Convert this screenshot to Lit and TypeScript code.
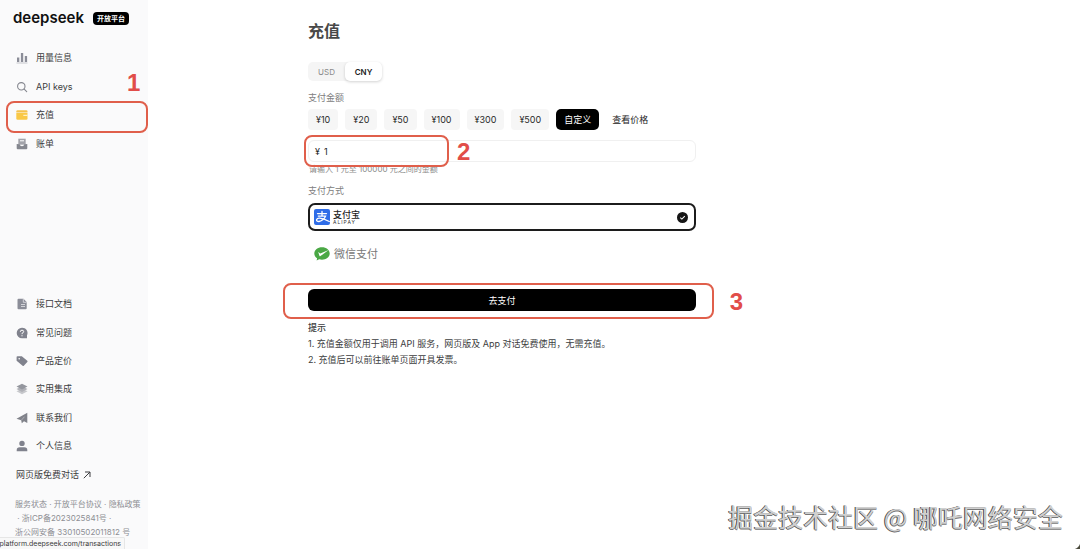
import { LitElement, html, css, svg, TemplateResult } from "lit";
import { customElement, property, state } from "lit/decorators.js";

const icons: Record<string, TemplateResult> = {
  usage: svg`<path fill="#8b8d98" d="M1 5.500h2.300V10H1zM4.900 1h2.300v9H4.900zM8.800 4h2.300v6H8.800z"/><path stroke="#c4c5cb" d="M.5 11h11"/>`,
  keys: svg`<g fill="none" stroke="#85878f" stroke-width="1.100" stroke-linecap="round"><circle cx="5.300" cy="5.300" r="3.700"/><path d="M8.200 8.200l2.500 2.500"/></g>`,
  wallet: svg`<path fill="#f5c24c" d="M1.500 1.200h8.800q1.200 0 1.200 1.300v1H.3v-1q0-1.300 1.200-1.300z"/><path fill="#f9c846" d="M.3 4.100h11.200v5.400q0 1.300-1.200 1.300H1.500Q.3 10.800.3 9.500z"/><path fill="#fff3cf" d="M7.300 5.800h4.200v1.100H7.300z"/>`,
  bill: svg`<path fill="#a2a3aa" d="M2.300.7h7.400v6H2.300z"/><path stroke="#fff" d="M4 2.800h4"/><path fill="#85878f" d="M.7 6l3 .2Q4 8.300 6 8.300t2.300-2.100l3-.2v4.200q0 1-1 1H1.700q-1 0-1-1z"/>`,
  docs: svg`<path fill="#8b8d98" d="M2.500.8h5L10.700 4v6.200q0 1-1 1H2.500q-1 0-1-1V1.800q0-1 1-1z"/><path stroke="#e4e4e8" stroke-width=".8" fill="none" d="M7.300 1v3.300h3.200M5 6.500h4M5 8.500h4"/>`,
  faq: svg`<path fill="#80828d" d="M6 .7a5.300 5.300 0 1 0 0 10.600h5v-3A5.300 5.300 0 0 0 6 .7z"/><path fill="none" stroke="#fff" d="M4.300 4.800Q4.300 3.200 6 3.200t1.700 1.500Q7.700 5.600 6 6.400v.8M6 8.200v1.100"/>`,
  price: svg`<path fill="#80828d" d="M.6 2Q.6 1.200 1.500 1.200h4.300l5.500 4.600q.6.600 0 1.200L7.800 10.700q-.6.500-1.200 0L.6 5.800z"/><circle cx="3.200" cy="3.700" r=".8" fill="#fff"/>`,
  layers: svg`<path fill="#c7c8cc" d="M.5 8.300L6 5.800l5.500 2.500L6 11.300z"/><path fill="#b0b1b7" d="M.5 6L6 3.300 11.500 6 6 9z"/><path fill="#94969e" d="M.5 3.500L6 .7l5.500 2.800L6 6.500z"/>`,
  contact: svg`<path fill="#80828a" d="M.5 6.700L11.300.8v10.300L8 9.300l-2.200 2-.6-3.100z"/><path stroke="#d8d8dc" stroke-width=".5" d="M5.400 8.200L8.500 4.700"/>`,
  user: svg`<circle cx="6" cy="3.400" r="2.700" fill="#80828d"/><path fill="#80828d" d="M.7 11.200V9.900q0-2.600 3-2.600h4.600q3 0 3 2.600v1.300z"/>`,
};

interface NavEntry {
  icon: string;
  label: string;
}

const primary: NavEntry[] = [
  { icon: "usage", label: "用量信息" },
  { icon: "keys", label: "API keys" },
  { icon: "wallet", label: "充值" },
  { icon: "bill", label: "账单" },
];

const secondary: NavEntry[] = [
  { icon: "docs", label: "接口文档" },
  { icon: "faq", label: "常见问题" },
  { icon: "price", label: "产品定价" },
  { icon: "layers", label: "实用集成" },
  { icon: "contact", label: "联系我们" },
  { icon: "user", label: "个人信息" },
];

const annotation = css`
  .mark {
    position: absolute;
    box-sizing: border-box;
    border: 2px solid #e05f4b;
    border-radius: 8px;
    pointer-events: none;
  }
  .step {
    position: absolute;
    font: bold 24px/24px "Liberation Sans", sans-serif;
    color: #e14d49;
    pointer-events: none;
  }
`;

@customElement("side-bar")
class SideBar extends LitElement {
  static styles = [
    annotation,
    css`
      :host {
        display: flex;
        flex-direction: column;
        justify-content: space-between;
        box-sizing: border-box;
        width: 148px;
        flex: none;
        padding: 8px 0 10px;
        background: #fafafb;
        color: #3c3d40;
      }
      .brand {
        display: flex;
        align-items: center;
        gap: 9px;
        height: 20px;
        padding-left: 13px;
        margin-bottom: 16px;
      }
      .word {
        font-size: 15px;
        line-height: 20px;
        font-weight: 600;
        color: #101010;
      }
      .badge {
        padding: 0 4px;
        border-radius: 4px;
        background: #000;
        color: #fff;
        font-size: 7px;
        line-height: 13px;
        font-weight: 700;
      }
      .list {
        display: grid;
        grid-auto-rows: 1fr;
        margin: 0;
        padding: 0;
        list-style: none;
      }
      .top {
        height: 114px;
      }
      .bottom {
        height: 199px;
      }
      .item {
        position: relative;
        display: flex;
        align-items: center;
      }
      .link {
        display: flex;
        align-items: center;
        gap: 8px;
        padding-left: 16px;
        font-size: 9px;
        line-height: 16px;
        color: inherit;
        text-decoration: none;
      }
      .glyph {
        width: 12px;
        height: 12px;
      }
      .chat {
        gap: 4px;
      }
      .arrow {
        width: 8px;
        height: 8px;
      }
      .around {
        inset: 0 0 -3px 6px;
      }
      .one {
        left: 127px;
        top: -30px;
      }
      .legal {
        margin: 8px 0 0 15px;
        font-size: 8px;
        line-height: 14px;
        color: #8d8e93;
        white-space: nowrap;
      }
      .legal a {
        color: inherit;
        text-decoration: none;
      }
      .row {
        display: block;
      }
    `,
  ];

  @property() current = "充值";

  private entry(e: NavEntry) {
    const active = e.label === this.current;
    return html`<li class="item">
      <a class="link" href="#" aria-current=${active ? "page" : "false"}>
        <svg class="glyph" viewBox="0 0 12 12" aria-hidden="true">${icons[e.icon]}</svg>
        <span>${e.label}</span>
      </a>
      ${active ? html`<span class="mark around"></span><span class="step one">1</span>` : ""}
    </li>`;
  }

  render() {
    return html`
      <div>
        <div class="brand"><span class="word">deepseek</span><span class="badge">开放平台</span></div>
        <ul class="list top">${primary.map((e) => this.entry(e))}</ul>
      </div>
      <div>
        <ul class="list bottom">
          ${secondary.map((e) => this.entry(e))}
          <li class="item">
            <a class="link chat" href="#"><span>网页版免费对话</span>
              <svg class="arrow" viewBox="0 0 8 8" fill="none" stroke="#3c3d40" aria-hidden="true"><path d="M.8 7.200L7 1M2 1h5v5"/></svg>
            </a>
          </li>
        </ul>
        <div class="legal">
          <span class="row"><a href="#">服务状态</a> · <a href="#">开放平台协议</a> · <a href="#">隐私政策</a></span>
          <span class="row">&nbsp;· <a href="#">浙ICP备2023025841号</a> ·</span>
          <span class="row"><a href="#">浙公网安备 33010502011812 号</a></span>
        </div>
      </div>
    `;
  }
}

@customElement("top-up")
class TopUp extends LitElement {
  static styles = [
    annotation,
    css`
      :host {
        display: block;
        flex: 1;
        box-sizing: border-box;
        min-width: 0;
        padding: 20px 160px 0;
        color: #3c3d40;
      }
      .column {
        display: flex;
        flex-direction: column;
        max-width: 388px;
      }
      button,
      input {
        font: inherit;
        color: inherit;
        border: 0;
        background: none;
        padding: 0;
        margin: 0;
      }
      .title {
        margin: 0 0 20px;
        font-size: 16px;
        line-height: 22px;
        font-weight: 600;
        color: #484848;
      }
      .segment {
        display: flex;
        align-self: flex-start;
        height: 19px;
        border-radius: 5px;
        background: #f5f5f5;
      }
      .currency {
        width: 37px;
        border-radius: 5px;
        font-size: 8px;
        color: #8b8b8b;
      }
      .currency[aria-pressed="true"] {
        background: #fff;
        color: #222;
        font-weight: 600;
        box-shadow: 0 1px 3px rgba(0, 0, 0, 0.18);
      }
      .label {
        margin-top: 9px;
        font-size: 9px;
        line-height: 16px;
        color: #808080;
      }
      .amounts {
        display: flex;
        gap: 7px;
        margin-top: 3px;
      }
      .amount {
        height: 21px;
        padding: 0 8px;
        border-radius: 4px;
        background: #f6f6f6;
        font-size: 9px;
        color: #2a2a2a;
      }
      .amount[aria-pressed="true"] {
        border-radius: 5px;
        background: #000;
        color: #fff;
      }
      .prices {
        align-self: center;
        margin-left: 6px;
        font-size: 9px;
        color: #222;
        text-decoration: none;
      }
      .field {
        position: relative;
        display: flex;
        align-items: center;
        gap: 4px;
        box-sizing: border-box;
        height: 22px;
        margin-top: 10px;
        padding: 0 6px;
        border: 1px solid #f0f0f0;
        border-radius: 6px;
        font-size: 9px;
        color: #222;
      }
      .value {
        flex: 1;
        min-width: 0;
        outline: 0;
      }
      .hint {
        margin-left: 1px;
        font-size: 8px;
        line-height: 14px;
        color: #8b8b8b;
      }
      .way {
        margin-top: 7px;
      }
      .method {
        display: flex;
        align-items: center;
        box-sizing: border-box;
        height: 28px;
        margin-top: 4px;
        padding: 0 6px 0 4px;
        border: 2px solid transparent;
        border-radius: 7px;
      }
      .method.chosen {
        border-color: #1c1c1c;
      }
      .method + .method {
        margin-top: 9px;
      }
      .radio {
        position: absolute;
        opacity: 0;
      }
      .alipay {
        width: 16px;
        height: 16px;
        margin-right: 3px;
      }
      .names {
        display: grid;
      }
      .zh {
        font-size: 9px;
        line-height: 10px;
        font-weight: 500;
        color: #222;
      }
      .en {
        font-size: 5px;
        line-height: 5px;
        letter-spacing: 1px;
        color: #333;
      }
      .tick {
        width: 11px;
        height: 11px;
        margin-left: auto;
      }
      .wechat {
        width: 16px;
        height: 14px;
        margin-right: 4px;
      }
      .wx {
        font-size: 11px;
        line-height: 16px;
        color: #787878;
      }
      .payrow {
        position: relative;
        display: grid;
        margin-top: 21px;
      }
      .pay {
        height: 22px;
        border-radius: 6px;
        background: #000;
        color: #fff;
        font-size: 9px;
      }
      .notes {
        margin-top: 9px;
        font-size: 9px;
        line-height: 16px;
      }
      .heading {
        margin: 0;
        font-size: inherit;
        font-weight: 500;
      }
      .note {
        margin: 0;
      }
      .amountmark {
        left: -5px;
        top: -6px;
        width: 145px;
        height: 32px;
      }
      .two {
        left: 148px;
        top: -1px;
      }
      .paymark {
        inset: -6px -18px -8px -25px;
      }
      .three {
        right: -47px;
        top: 1px;
      }
    `,
  ];

  @state() private currency = "CNY";
  @state() private choice = "自定义";

  render() {
    return html`<div class="column">
      <h1 class="title">充值</h1>
      <div class="segment">
        ${["USD", "CNY"].map(
          (c) => html`<button class="currency" aria-pressed=${c === this.currency} @click=${() => (this.currency = c)}>${c}</button>`
        )}
      </div>
      <label class="label" for="amount">支付金额</label>
      <div class="amounts">
        ${["¥10", "¥20", "¥50", "¥100", "¥300", "¥500", "自定义"].map(
          (a) => html`<button class="amount" aria-pressed=${a === this.choice} @click=${() => (this.choice = a)}>${a}</button>`
        )}
        <a class="prices" href="#">查看价格</a>
      </div>
      <div class="field">
        <span>¥</span><input class="value" id="amount" type="text" inputmode="numeric" value="1" />
        <span class="mark amountmark"></span><span class="step two">2</span>
      </div>
      <span class="hint">请输入 1 元至 100000 元之间的金额</span>
      <span class="label way">支付方式</span>
      <label class="method chosen">
        <input class="radio" type="radio" name="method" checked />
        <svg class="alipay" viewBox="0 0 16 16" aria-hidden="true">
          <rect width="16" height="16" rx="2" fill="#2f6de8" />
          <g fill="none" stroke="#fff" stroke-width="1.300" stroke-linecap="round">
            <path d="M3.500 4.600h9M8 2.400v4.700M4.300 7.100h7.300Q9.800 11.600 5 12.500 2.300 12.600 2.600 10.700 3.100 9 5.800 9.200 9.500 9.700 15.300 12.500" />
          </g>
        </svg>
        <span class="names"><span class="zh">支付宝</span><span class="en">ALIPAY</span></span>
        <svg class="tick" viewBox="0 0 12 12" aria-hidden="true"><circle cx="6" cy="6" r="6" fill="#151515" /><path d="M3.600 6.200l1.700 1.600 3.200-3.400" fill="none" stroke="#fff" stroke-width="1.100" /></svg>
      </label>
      <label class="method">
        <input class="radio" type="radio" name="method" />
        <svg class="wechat" viewBox="0 0 16 14" aria-hidden="true">
          <path fill="#4aa845" d="M8 .3C3.700.3.300 3 .300 6.500c0 2 1.100 3.700 2.800 4.800l-.5 2.300 2.600-1.300c.9.300 1.800.4 2.800.4 4.300 0 7.700-2.700 7.700-6.200S12.300.3 8 .3z" />
          <path fill="#fff" d="M4.200 4.900l2.100 1.700L14.600 3 6.500 9.100q-.7.400-1-.2z" />
        </svg>
        <span class="wx">微信支付</span>
      </label>
      <div class="payrow">
        <button class="pay">去支付</button>
        <span class="mark paymark"></span><span class="step three">3</span>
      </div>
      <section class="notes">
        <h2 class="heading">提示</h2>
        <p class="note">1. 充值金额仅用于调用 API 服务，网页版及 App 对话免费使用，无需充值。</p>
        <p class="note">2. 充值后可以前往账单页面开具发票。</p>
      </section>
    </div>`;
  }
}

@customElement("app-root")
class AppRoot extends LitElement {
  static styles = css`
    :host {
      position: relative;
      display: flex;
      min-height: 100vh;
      overflow: hidden;
      background: #fff;
      font-family: Inter, "Noto Sans CJK SC", sans-serif;
    }
    .status {
      position: absolute;
      left: 0;
      bottom: 0;
      display: flex;
      justify-content: flex-end;
      box-sizing: border-box;
      width: 125px;
      padding-right: 3px;
      overflow: hidden;
      border: 1px solid #e6e6e6;
      border-width: 1px 1px 0 0;
      border-radius: 0 2px 0 0;
      background: #f8f8f8;
      color: #3a3a3a;
      font-size: 7px;
      line-height: 11px;
      white-space: nowrap;
    }
    .watermark {
      position: absolute;
      right: 17px;
      bottom: 15px;
      font: 25px/36px "Noto Sans CJK SC", sans-serif;
      color: #d0d0d0;
      text-shadow: -1px 0 0 #4a4a4a, 0 1px 0 #777;
      white-space: nowrap;
    }
    .corner {
      position: absolute;
      right: 0;
      bottom: 0;
      width: 8px;
      height: 8px;
      background: radial-gradient(circle at 0 0, transparent 8px, #4a4a3c 9px);
    }
  `;

  render() {
    return html`
      <side-bar></side-bar>
      <top-up></top-up>
      <div class="status">platform.deepseek.com/transactions</div>
      <div class="watermark">掘金技术社区 @ 哪吒网络安全</div>
      <span class="corner"></span>
    `;
  }
}
